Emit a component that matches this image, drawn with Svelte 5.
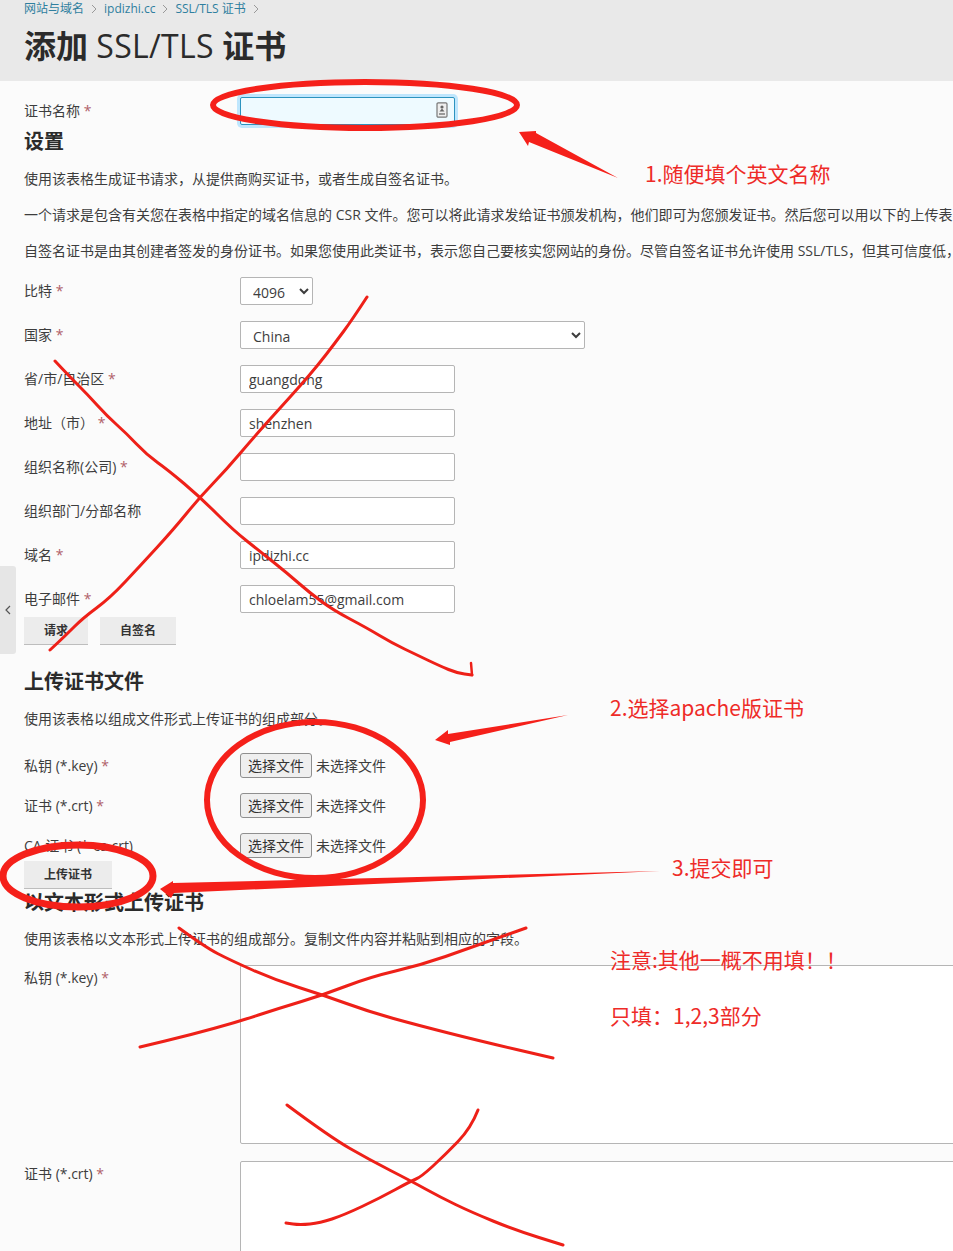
<script>
  const settingsRows = [
    { label: '省/市/自治区', required: true, value: 'guangdong' },
    { label: '地址（市）', required: true, value: 'shenzhen' },
    { label: '组织名称(公司)', required: true, value: '' },
    { label: '组织部门/分部名称', required: false, value: '' },
    { label: '域名', required: true, value: 'ipdizhi.cc' },
    { label: '电子邮件', required: true, value: 'chloelam55@gmail.com' }
  ];

  const fileRows = [
    { label: '私钥 (*.key)', required: true },
    { label: '证书 (*.crt)', required: true },
    { label: 'CA 证书 (*-ca.crt)', required: false }
  ];

  const crumbs = ['网站与域名', 'ipdizhi.cc', 'SSL/TLS 证书'];

  // hand drawn crosses on top of the form
  const crosses = [
    [[367, 297], [352, 320], [335, 343], [318, 365], [300, 386], [281, 407], [254, 437], [226, 470], [200, 497], [173, 530], [140, 566], [110, 598], [83, 618], [65, 636], [50, 650]],
    [[55, 361], [70, 377], [88, 395], [107, 416], [126, 433], [147, 455], [168, 470], [200, 497], [233, 530], [262, 553], [287, 573], [310, 593], [333, 610], [367, 628], [392, 643], [417, 655], [440, 666], [457, 673], [472, 675]],
    [[179, 928], [205, 947], [230, 960], [275, 980], [323, 995], [370, 1012], [417, 1025], [480, 1041], [553, 1058]],
    [[526, 928], [470, 948], [421, 965], [370, 977], [323, 995], [280, 1008], [237, 1022], [190, 1035], [140, 1047]],
    [[287, 1105], [330, 1137], [370, 1160], [411, 1181], [440, 1197], [471, 1212], [515, 1230], [563, 1245]],
    [[478, 1110], [471, 1128], [445, 1155], [421, 1177], [411, 1181], [380, 1198], [344, 1215], [320, 1223], [300, 1225], [286, 1223]]
  ];

  // round the corners by curving through the midpoints
  function smooth(points) {
    let d = `M${points[0][0]} ${points[0][1]}`;
    for (let i = 1; i < points.length - 1; i++) {
      const [x, y] = points[i];
      const [nx, ny] = points[i + 1];
      d += ` Q${x} ${y} ${(x + nx) / 2} ${(y + ny) / 2}`;
    }
    const end = points[points.length - 1];
    return `${d} L${end[0]} ${end[1]}`;
  }
</script>

<div class="page">
  <header class="top">
    <nav class="crumbs">
      {#each crumbs as crumb}
        <a href="#top">{crumb}</a>
        <svg class="sep" width="20" height="10" viewBox="0 0 20 10"><path d="M8 1 L12 5 L8 9" fill="none" stroke="#999" stroke-width="1" /></svg>
      {/each}
    </nav>
    <h1><b>添加</b> <span>SSL/TLS</span> <b>证书</b></h1>
  </header>

  <main class="content">
    <div class="row">
      <label for="cert-name">证书名称 <i>*</i></label>
      <div class="focus-wrap">
        <input id="cert-name" class="text focused" type="text" />
        <svg class="key-icon" width="12" height="16" viewBox="0 0 12 16">
          <rect x="1" y="0.8" width="10" height="14.4" rx="1.2" fill="#eee" stroke="#777" stroke-width="1.2" />
          <circle cx="6" cy="5" r="1.6" fill="#666" />
          <path d="M3.5 9.5 L6 6.5 L8.5 9.5 Z" fill="#666" />
          <rect x="3" y="11" width="6" height="2" fill="#999" />
        </svg>
      </div>
    </div>

    <h2 class="first">设置</h2>
    <p>使用该表格生成证书请求，从提供商购买证书，或者生成自签名证书。</p>
    <p>一个请求是包含有关您在表格中指定的域名信息的 CSR 文件。您可以将此请求发给证书颁发机构，他们即可为您颁发证书。然后您可以用以下的上传表</p>
    <p class="last">自签名证书是由其创建者签发的身份证书。如果您使用此类证书，表示您自己要核实您网站的身份。尽管自签名证书允许使用 SSL/TLS，但其可信度低，</p>

    <div class="fields">
      <div class="row">
        <label for="bits">比特 <i>*</i></label>
        <select id="bits" class="pick small"><option>4096</option></select>
      </div>
      <div class="row">
        <label for="country">国家 <i>*</i></label>
        <select id="country" class="pick wide"><option>China</option></select>
      </div>
      {#each settingsRows as row}
        <div class="row">
          <label for={row.label}>{row.label}{#if row.required}&nbsp;<i>*</i>{/if}</label>
          <input id={row.label} class="text" type="text" value={row.value} />
        </div>
      {/each}
    </div>

    <div class="actions">
      <button class="act short">请求</button>
      <button class="act">自签名</button>
    </div>

    <h2 class="upload">上传证书文件</h2>
    <p class="file-note">使用该表格以组成文件形式上传证书的组成部分。</p>

    <div class="files">
      {#each fileRows as row}
        <div class="file-row">
          <span class="file-label">{row.label}{#if row.required}&nbsp;<i>*</i>{/if}</span>
          <button class="choose">选择文件</button>
          <span class="none">未选择文件</span>
        </div>
      {/each}
    </div>

    <button class="act send">上传证书</button>

    <h2 class="text-head">以文本形式上传证书</h2>
    <p class="text-note">使用该表格以文本形式上传证书的组成部分。复制文件内容并粘贴到相应的字段。</p>

    <div class="area-row">
      <label for="key-text">私钥 (*.key) <i>*</i></label>
      <textarea id="key-text"></textarea>
    </div>
    <div class="area-row">
      <label for="crt-text">证书 (*.crt) <i>*</i></label>
      <textarea id="crt-text"></textarea>
    </div>
  </main>

  <button class="side-tab" aria-label="收起">
    <svg width="6" height="10" viewBox="0 0 6 10"><path d="M5 1 L1 5 L5 9" fill="none" stroke="#555" stroke-width="1.2" /></svg>
  </button>

  <svg class="marks" width="953" height="1251" viewBox="0 0 953 1251">
    <ellipse cx="365" cy="105" rx="152" ry="23" fill="none" stroke="#f5201a" stroke-width="6" />
    <ellipse cx="315" cy="800" rx="108" ry="78" fill="none" stroke="#f5201a" stroke-width="6" />
    <ellipse cx="78" cy="876" rx="75" ry="31" fill="none" stroke="#f5201a" stroke-width="7" />

    <path d="M519 132 L536 131 L536 133 L618 178 L529 142 L528 146 Z" fill="#f5201a" />
    <path d="M435 740 L448 730 L448 734 L568 715 L450 742 L450 745 Z" fill="#f5201a" />
    <path d="M160 889 L173 881 L173 883 L660 871 L174 893 L171 898 Z" fill="#f5201a" />

    {#each crosses as points}
      <path d={smooth(points)} fill="none" stroke="#ee2018" stroke-width="3" stroke-linecap="round" stroke-linejoin="round" />
    {/each}
    <path d="M472 675 L471 663" fill="none" stroke="#ee2018" stroke-width="2.5" stroke-linecap="round" />
  </svg>

  <div class="note n1">1.随便填个英文名称</div>
  <div class="note n2">2.选择apache版证书</div>
  <div class="note n3">3.提交即可</div>
  <div class="note n4">注意:其他一概不用填！！</div>
  <div class="note n5">只填：1,2,3部分</div>
</div>

<style>
  :global(body) {
    margin: 0;
    background: #fbfbfb;
  }

  .page {
    position: relative;
    width: 953px;
    height: 1251px;
    overflow: hidden;
    background: #fbfbfb;
    color: #3d3d3d;
    font-family: "Open Sans", "Noto Sans CJK SC", sans-serif;
    font-size: 14px;
    line-height: 21px;
  }

  .top {
    height: 81px;
    padding: 1px 24px 0;
    box-sizing: border-box;
    background: #e9e9e9;
  }

  .crumbs {
    display: flex;
    align-items: center;
    height: 16px;
    font-size: 12px;
    line-height: 16px;
  }

  .crumbs a {
    color: #2f7f9f;
    text-decoration: none;
  }

  .sep {
    flex: none;
  }

  h1 {
    margin: 9px 0 0;
    font-size: 32px;
    line-height: 40px;
    font-weight: 400;
    color: #2b2b2b;
    white-space: nowrap;
  }

  h1 b {
    font-weight: 700;
  }

  h1 span {
    letter-spacing: 0.3px;
  }

  .content {
    padding: 16px 0 0 24px;
  }

  h2 {
    margin: 0;
    font-size: 20px;
    line-height: 27px;
    font-weight: 700;
    color: #2b2b2b;
  }

  h2.first {
    margin: 3px 0 13px;
  }

  h2.upload {
    margin: 23px 0 13px;
  }

  h2.text-head {
    margin-bottom: 12px;
  }

  p {
    margin: 0 0 15px;
    white-space: nowrap;
  }

  p.last {
    margin-bottom: 15.5px;
  }

  p.file-note {
    margin-bottom: 24px;
  }

  p.text-note {
    margin-bottom: 16px;
  }

  .fields {
    display: flex;
    flex-direction: column;
    gap: 16px;
  }

  .row {
    display: flex;
    height: 28px;
  }

  .row label {
    width: 216px;
    line-height: 27px;
    flex: none;
  }

  i {
    font-style: normal;
    color: #b0606a;
  }

  .text,
  .pick {
    box-sizing: border-box;
    height: 28px;
    border: 1px solid #b5b5b5;
    border-radius: 2px;
    background: #fff;
    color: #3d3d3d;
    font: inherit;
  }

  .text {
    width: 215px;
    padding: 1px 8px 0;
  }

  .pick {
    padding: 3px 8px 0;
  }

  .small {
    width: 73px;
  }

  .wide {
    width: 345px;
  }

  .focus-wrap {
    position: relative;
    display: flex;
  }

  .focused {
    border-color: #2c93bf;
    background: #eefaff;
    box-shadow: 0 0 0 3px #bfe6fd;
  }

  .key-icon {
    position: absolute;
    top: 5px;
    right: 7px;
  }

  .actions {
    display: flex;
    gap: 12px;
    margin-top: 4px;
  }

  .act {
    height: 28px;
    width: 76px;
    padding: 0;
    border: 0;
    border-bottom: 1px solid #bdbdbd;
    background: #ececec;
    color: #333;
    font: inherit;
    font-size: 12px;
    font-weight: 600;
  }

  .act.short {
    width: 64px;
  }

  .act.send {
    display: block;
    width: 88px;
    margin-top: 3px;
  }

  .files {
    display: flex;
    flex-direction: column;
    gap: 15px;
  }

  .file-row {
    display: flex;
    align-items: center;
    height: 25px;
  }

  .file-label {
    width: 216px;
    flex: none;
  }

  .choose {
    box-sizing: border-box;
    width: 72px;
    height: 25px;
    padding: 1px 0 0;
    border: 1px solid #8f8f8f;
    border-radius: 3px;
    background: #efefef;
    color: #333;
    font: inherit;
    line-height: 22px;
  }

  .none {
    margin-left: 4px;
  }

  .area-row {
    display: flex;
    margin-bottom: 17px;
  }

  .area-row label {
    width: 216px;
    flex: none;
    line-height: 26px;
  }

  textarea {
    display: block;
    box-sizing: border-box;
    flex: none;
    width: 760px;
    height: 179px;
    border: 1px solid #b5b5b5;
    border-radius: 2px;
    background: #fff;
    resize: none;
  }

  .side-tab {
    position: absolute;
    left: 0;
    top: 566px;
    display: flex;
    align-items: center;
    justify-content: center;
    width: 16px;
    height: 88px;
    padding: 0;
    border: 0;
    border-radius: 0 3px 3px 0;
    background: #e6e6e6;
  }

  .marks {
    position: absolute;
    inset: 0;
    pointer-events: none;
  }

  .note {
    position: absolute;
    color: #ee2b28;
    font-family: "Noto Sans CJK SC", sans-serif;
    font-size: 21px;
    line-height: 28px;
    white-space: nowrap;
  }

  .n1 { left: 645px; top: 159px; }
  .n2 { left: 610px; top: 693px; }
  .n3 { left: 672px; top: 853px; }
  .n4 { left: 610px; top: 945px; }
  .n5 { left: 610px; top: 1001px; }
</style>
